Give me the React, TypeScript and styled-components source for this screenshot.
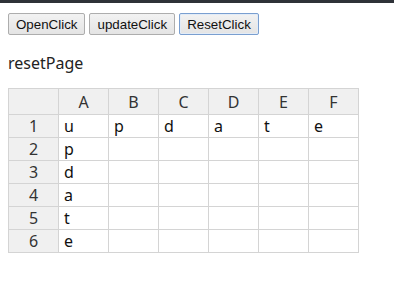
import React, { FC } from 'react';
import styled, { createGlobalStyle } from 'styled-components';

const GlobalStyle = createGlobalStyle`
  html, body {
    margin: 0;
    padding: 0;
    background: #ffffff;
  }
`;

const columns = ['A', 'B', 'C', 'D', 'E', 'F'];
const rows: string[][] = [
  ['u', 'p', 'd', 'a', 't', 'e'],
  ['p', '', '', '', '', ''],
  ['d', '', '', '', '', ''],
  ['a', '', '', '', '', ''],
  ['t', '', '', '', '', ''],
  ['e', '', '', '', '', ''],
];

const App: FC = () => {
  return (
    <>
      <GlobalStyle />
      <TopEdge />
      <Page>
        <Toolbar>
          <ActionButton>{'OpenClick'}</ActionButton>
          <ActionButton>{'updateClick'}</ActionButton>
          <ActionButton focused>{'ResetClick'}</ActionButton>
        </Toolbar>
        <PageTitle>{'resetPage'}</PageTitle>
        <Sheet>
          <colgroup>
            <col />
            {columns.map((c) => (
              <col key={c} />
            ))}
          </colgroup>
          <thead>
            <tr>
              <HeaderCell />
              {columns.map((c) => (
                <HeaderCell key={c}>{c}</HeaderCell>
              ))}
            </tr>
          </thead>
          <tbody>
            {rows.map((row, i) => (
              <tr key={i}>
                <HeaderCell>{i + 1}</HeaderCell>
                {row.map((value, j) => (
                  <DataCell key={j}>{value}</DataCell>
                ))}
              </tr>
            ))}
          </tbody>
        </Sheet>
      </Page>
    </>
  );
};

export default App;

const TopEdge = styled.div`
  height: 3px;
  background: #2e3238;
`;

const Page = styled.div`
  padding: 10px 8px 8px 8px;
`;

const Toolbar = styled.div`
  display: flex;
  gap: 4px;
`;

const ActionButton = styled.button<{ focused?: boolean }>`
  height: 22px;
  padding: 1px 7px;
  font-family: 'Liberation Sans', Arial, sans-serif;
  font-size: 13.33px;
  color: #111;
  border-radius: 2px;
  border: 1px solid ${(props) => (props.focused ? '#7a9fd0' : '#adadad')};
  background: linear-gradient(#f2f2f2, #e4e4e4);
  box-shadow: ${(props) => (props.focused ? 'inset 0 0 0 1px #e3ecf7' : 'none')};
  cursor: pointer;
`;

const PageTitle = styled.div`
  margin-top: 17px;
  font-family: 'Noto Sans', 'Open Sans', sans-serif;
  font-size: 16px;
  line-height: 22px;
  color: #222;
`;

const Sheet = styled.table`
  margin-top: 14px;
  border-collapse: collapse;
  table-layout: fixed;
  width: 351px;
  font-family: 'Noto Sans', 'Open Sans', sans-serif;
  font-size: 16px;
  color: #222;

  col {
    width: 50px;
  }

  thead tr {
    height: 26px;
  }

  tbody tr {
    height: 23px;
  }
`;

const HeaderCell = styled.td`
  border: 1px solid #d4d4d4;
  background: #f0f0f0;
  text-align: center;
  padding: 0;
  line-height: 20px;
  color: #333;
`;

const DataCell = styled.td`
  border: 1px solid #d4d4d4;
  padding: 0 5px;
  line-height: 20px;
  color: #111;
`;
